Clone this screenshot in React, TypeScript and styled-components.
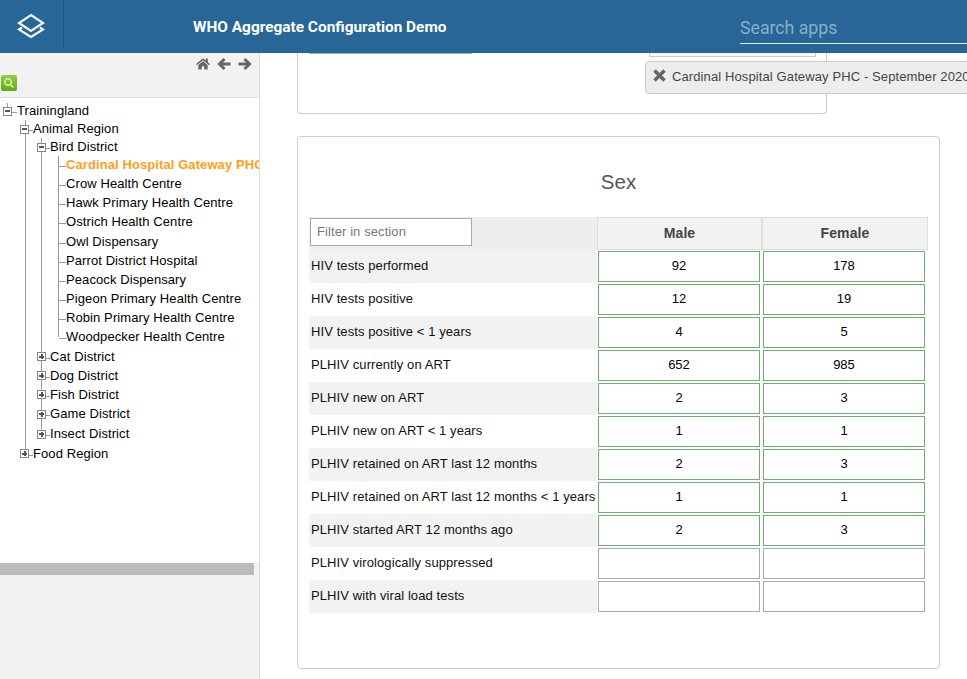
import React from "react";
import styled, { createGlobalStyle } from "styled-components";
import { FaHome, FaSearch } from "react-icons/fa";

const Global = createGlobalStyle`
  html, body { margin: 0; height: 679px; overflow: hidden; background: #fff; }
  body { font-family: "Liberation Sans", Arial, sans-serif; font-size: 13px; letter-spacing: .09px; color: #000; }
  * { box-sizing: border-box; }
`;
const Page = styled.div`display: flex; flex-direction: column; height: 679px; width: 967px; overflow: hidden;`;
const Header = styled.header`
  position: relative; z-index: 2; flex: 0 0 53px; display: flex; align-items: flex-start; background: #276696; color: #fff;
`;
const LogoBox = styled.div`
  width: 64px; height: 48px; border-right: 1px solid #20577f; display: flex; align-items: center; justify-content: center; padding: 3px 1px 0 0;
`;
const AppTitle = styled.h1`
  margin: 18px 0 0 129px; font: 700 15.4px/18px Roboto, sans-serif; letter-spacing: 0; color: #fff; white-space: nowrap;
`;
const Search = styled.div`
  margin: 14px 0 0 auto; width: 227px; height: 30px; border-bottom: 1px solid #e4edf3; font: 400 17.7px/28px Roboto, sans-serif; letter-spacing: 0; color: #87b0cd;
`;
const Body = styled.div`flex: 1; display: flex; min-height: 0;`;
const Sidebar = styled.aside`
  flex: 0 0 260px; width: 260px; min-width: 0; display: flex; flex-direction: column; background: #f2f2f2; border-right: 1px solid #ddd;
`;
const Toolbar = styled.div`
  flex: 0 0 45px; position: relative; border-bottom: 1px solid #ddd; padding: 3px 7px 0 0; display: flex; justify-content: flex-end; gap: 7px; color: #666;
`;
const NavIcon = styled.span`display: block; height: 16px; font-size: 14px; line-height: 16px; svg { display: block; margin-top: 1px; }`;
const SearchBtn = styled.button`
  position: absolute; left: 1px; top: 22px; width: 16px; height: 16px; padding: 0; border: 0; border-radius: 2px;
  background: linear-gradient(#8fd13f, #5ba919); color: #d3f2ae; display: flex; align-items: center; justify-content: center; font-size: 10px;
`;
const TreeArea = styled.div`flex: 0 0 465px; min-width: 0; background: #fff; overflow: hidden; padding-top: 4px;`;
const HScroll = styled.div`flex: 0 0 12px; width: 254px; background: #bbb;`;
const Ul = styled.ul<{ $indent: number }>`list-style: none; margin: 0 0 0 ${p => p.$indent}px; padding: 0;`;
const Li = styled.li<{ $line?: boolean }>`
  position: relative; white-space: nowrap;
  ${p => p.$line ? `
  &::before { content: ""; position: absolute; left: 0; top: 0; bottom: 0; width: 1px; background: #999; }
  &:last-child::before { bottom: auto; height: 10px; }` : ""}
`;
const Row = styled.div<{ $h: number; $shift: number }>`
  position: relative; display: flex; align-items: center; height: ${p => p.$h}px; margin-left: ${p => p.$shift}px; line-height: 18px;
`;
const Toggle = styled.span`
  position: relative; flex: 0 0 9px; width: 9px; height: 9px; border: 1px solid #888; background: #fff;
  &::before { content: ""; position: absolute; left: 1px; top: 2.5px; width: 5px; height: 2px; background: #555; }
`;
const PlusToggle = styled(Toggle)`
  &::after { content: ""; position: absolute; left: 2.5px; top: 1px; width: 2px; height: 5px; background: #555; }
`;
const RootToggle = styled(Toggle)`
  &::after { content: ""; position: absolute; left: 3px; top: -5px; width: 1px; height: 4px; background: #999; }
`;
const Dash = styled.span<{ $w: number }>`flex: 0 0 ${p => p.$w}px; height: 1px; background: #999; margin-top: 3px;`;
const Label = styled.span<{ $active?: boolean }>`
  color: ${p => p.$active ? "#ff9f1a" : "#000"}; font-weight: ${p => p.$active ? 700 : 400};
`;
const Content = styled.main`position: relative; flex: 1; min-width: 0; padding-left: 37px;`;
const TopCard = styled.section`
  position: relative; width: 530px; height: 61px; border: 1px solid #ccc; border-top: 0; border-radius: 0 0 4px 4px;
`;
const CutInput = styled.div`position: absolute; left: 11px; top: 0; width: 163px; height: 1px; background: #aaa;`;
const CutBox = styled.div`position: absolute; left: 351px; top: 0; width: 167px; height: 4px; border: 1px solid #ccc; border-top: 0; background: #f7f7f7;`;
const Tag = styled.div`
  position: absolute; left: 385px; top: 8px; width: 340px; height: 33px; display: flex; align-items: center; gap: 6px; padding: 0 0 2px 7px;
  background: rgba(236,236,236,.92); border: 1px solid #ccc; border-radius: 4px; color: #444; white-space: nowrap; letter-spacing: .11px;
`;
const Card = styled.section`
  width: 643px; height: 533px; margin-top: 22px; border: 1px solid #ccc; border-radius: 4px; padding: 33px 11px 0;
`;
const SectionTitle = styled.h2`margin: 0 0 23px; height: 24px; font: 400 20.5px/24px "Liberation Sans", sans-serif; color: #555; text-align: center;`;
const Table = styled.table`width: 619px; border-collapse: separate; border-spacing: 0; table-layout: fixed;`;
const FilterCell = styled.th`width: 288px; height: 33px; padding: 1px 0 4px 1px; background: #eee; text-align: left; vertical-align: top;`;
const FilterInput = styled.input`
  display: block; width: 162px; height: 28px; border: 1px solid #aaa; padding: 0 6px 1px; font: 13px "Liberation Sans", sans-serif; letter-spacing: .09px; background: #fff;
  &::placeholder { color: #777; opacity: 1; }
`;
const ColHead = styled.th<{ $w: number }>`
  width: ${p => p.$w}px; height: 33px; padding: 0 0 1px; background: #f2f2f2; border: 1px solid #ddd; font: 700 14px "Liberation Sans", sans-serif; color: #444; text-align: center;
`;
const Tr = styled.tr`height: 33px;`;
const LabelCell = styled.td<{ $shade: boolean }>`
  padding: 0 0 3px 2px; background: ${p => p.$shade ? "#f2f2f2" : "#fff"}; white-space: nowrap; color: #111;
`;
const ValueCell = styled.td`padding: 1px 0 0 1px; vertical-align: top;`;
const ValueInput = styled.input<{ $filled: boolean }>`
  display: block; width: 162px; height: 31px; border: 1px solid ${p => p.$filled ? "#6fb06f" : "#aaa"}; padding: 0 0 2px; text-align: center;
  font: 13px "Liberation Sans", sans-serif; color: #000; background: #fff; outline: 0;
`;

const leaves: [string, number][] = [
  ["Crow Health Centre", 19], ["Hawk Primary Health Centre", 19], ["Ostrich Health Centre", 20], ["Owl Dispensary", 19],
  ["Parrot District Hospital", 19], ["Peacock Dispensary", 19], ["Pigeon Primary Health Centre", 19],
  ["Robin Primary Health Centre", 19], ["Woodpecker Health Centre", 20],
];
const districts: [string, number][] = [["Cat District", 19], ["Dog District", 19], ["Fish District", 19], ["Game District", 20], ["Insect District", 20]];
const rows: [string, string, string][] = [
  ["HIV tests performed", "92", "178"],
  ["HIV tests positive", "12", "19"],
  ["HIV tests positive < 1 years", "4", "5"],
  ["PLHIV currently on ART", "652", "985"],
  ["PLHIV new on ART", "2", "3"],
  ["PLHIV new on ART < 1 years", "1", "1"],
  ["PLHIV retained on ART last 12 months", "2", "3"],
  ["PLHIV retained on ART last 12 months < 1 years", "1", "1"],
  ["PLHIV started ART 12 months ago", "2", "3"],
  ["PLHIV virologically suppressed", "", ""],
  ["PLHIV with viral load tests", "", ""],
];

const Logo = () => (
  <svg width="28" height="25" viewBox="0 0 28 25" fill="none" stroke="#f2f6f9" strokeWidth="2.2">
    <path d="M14 2 L26 10 L14 18 L2 10 Z" />
    <path d="M5 14.5 L2 16.5 L14 24 L26 16.5 L23 14.5" />
  </svg>
);
const ArrowLeft = () => (
  <svg width="14" height="14" viewBox="0 0 14 14" fill="none" stroke="currentColor" strokeWidth="3">
    <path d="M7.5 2 L2.5 7 L7.5 12 M3 7 H13.5" />
  </svg>
);
const ArrowRight = () => (
  <svg width="14" height="14" viewBox="0 0 14 14" fill="none" stroke="currentColor" strokeWidth="3">
    <path d="M6.5 2 L11.5 7 L6.5 12 M11 7 H0.5" />
  </svg>
);
const RemoveIcon = () => (
  <svg width="13" height="13" viewBox="0 0 13 13" fill="none" stroke="#666" strokeWidth="3.6" style={{ flex: "none", marginTop: -3 }}>
    <path d="M1.5 1.5 L11.5 11.5 M11.5 1.5 L1.5 11.5" />
  </svg>
);

export default function App() {
  return (
    <Page>
      <Global />
      <Header>
        <LogoBox><Logo /></LogoBox>
        <AppTitle>WHO Aggregate Configuration Demo</AppTitle>
        <Search>Search apps</Search>
      </Header>
      <Body>
        <Sidebar>
          <Toolbar>
            <NavIcon><FaHome /></NavIcon>
            <NavIcon><ArrowLeft /></NavIcon>
            <NavIcon><ArrowRight /></NavIcon>
            <SearchBtn aria-label="Search"><FaSearch /></SearchBtn>
          </Toolbar>
          <TreeArea>
            <Ul $indent={0}>
              <Li>
                <Row $h={18} $shift={3}><RootToggle /><Dash $w={5} /><Label>Trainingland</Label></Row>
                <Ul $indent={25}>
                  <Li $line>
                    <Row $h={18} $shift={-5}><Toggle /><Dash $w={4} /><Label>Animal Region</Label></Row>
                    <Ul $indent={16}>
                      <Li $line>
                        <Row $h={18} $shift={-4}><Toggle /><Dash $w={4} /><Label>Bird District</Label></Row>
                        <Ul $indent={17}>
                          <Li $line>
                            <Row $h={18} $shift={1}><Dash $w={7} /><Label $active>Cardinal Hospital Gateway PHC</Label></Row>
                          </Li>
                          {leaves.map(([l, h]) => (
                            <Li $line key={l}>
                              <Row $h={h} $shift={1}><Dash $w={7} /><Label>{l}</Label></Row>
                            </Li>
                          ))}
                        </Ul>
                      </Li>
                      {districts.map(([d, h]) => (
                        <Li $line key={d}>
                          <Row $h={h} $shift={-4}><PlusToggle /><Dash $w={4} /><Label>{d}</Label></Row>
                        </Li>
                      ))}
                    </Ul>
                  </Li>
                  <Li $line>
                    <Row $h={19} $shift={-5}><PlusToggle /><Dash $w={4} /><Label>Food Region</Label></Row>
                  </Li>
                </Ul>
              </Li>
            </Ul>
          </TreeArea>
          <HScroll />
        </Sidebar>
        <Content>
          <TopCard>
            <CutInput />
            <CutBox />
          </TopCard>
          <Tag><RemoveIcon />Cardinal Hospital Gateway PHC - September 2020</Tag>
          <Card>
            <SectionTitle>Sex</SectionTitle>
            <Table>
              <thead>
                <tr>
                  <FilterCell><FilterInput placeholder="Filter in section" /></FilterCell>
                  <ColHead $w={165}>Male</ColHead>
                  <ColHead $w={166}>Female</ColHead>
                </tr>
              </thead>
              <tbody>
                {rows.map(([name, m, f], i) => (
                  <Tr key={name}>
                    <LabelCell $shade={i % 2 === 0}>{name}</LabelCell>
                    <ValueCell><ValueInput $filled={m !== ""} defaultValue={m} readOnly /></ValueCell>
                    <ValueCell><ValueInput $filled={f !== ""} defaultValue={f} readOnly /></ValueCell>
                  </Tr>
                ))}
              </tbody>
            </Table>
          </Card>
        </Content>
      </Body>
    </Page>
  );
}
